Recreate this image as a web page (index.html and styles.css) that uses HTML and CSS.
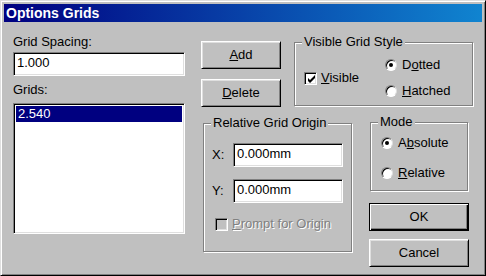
FILE: index.html
```html
<!DOCTYPE html>
<html lang="en">
<head>
    <meta charset="UTF-8">
    <title>Options Grids</title>
    <link rel="stylesheet" href="styles.css">
</head>
<body>

    <div class="window">
        <div class="titlebar">Options Grids</div>

        <div class="dialog">
            <!-- Left column: spacing + grid list -->
            <div class="col-left">
                <div class="label">Grid Spacing:</div>
                <div class="field field-spacing">1.000</div>
                <div class="label label-grids">Grids:</div>
                <div class="listbox">
                    <div class="list-item selected">2.540</div>
                </div>
            </div>

            <div class="col-right">
                <div class="row-top">
                    <div class="btn-stack">
                        <div class="btn"><u>A</u>dd</div>
                        <div class="btn"><u>D</u>elete</div>
                    </div>

                    <div class="group group-visible">
                        <span class="group-title">Visible Grid Style</span>
                        <div class="visible-body">
                            <div class="check check-visible">
                                <span class="box">
                                    <svg width="9" height="9" viewBox="0 0 9 9"><path d="M1 3v3l2 2l5-5v-3l-5 5z" fill="#000"/></svg>
                                </span>
                                <span><u>V</u>isible</span>
                            </div>
                            <div class="radio-stack">
                                <div class="option"><span class="radio checked"></span><span>D<u>o</u>tted</span></div>
                                <div class="option"><span class="radio"></span><span><u>H</u>atched</span></div>
                            </div>
                        </div>
                    </div>
                </div>

                <div class="row-bottom">
                    <div class="group group-relative">
                        <span class="group-title">Relative Grid Origin</span>
                        <div class="relative-body">
                            <div class="coord-row">
                                <span class="coord-label">X:</span>
                                <div class="field field-coord">0.000mm</div>
                            </div>
                            <div class="coord-row coord-y">
                                <span class="coord-label">Y:</span>
                                <div class="field field-coord">0.000mm</div>
                            </div>
                            <div class="check check-prompt disabled">
                                <span class="box"></span>
                                <span><u>P</u>rompt for Origin</span>
                            </div>
                        </div>
                    </div>

                    <div class="right-stack">
                        <div class="group group-mode">
                            <span class="group-title">Mode</span>
                            <div class="mode-body">
                                <div class="option"><span class="radio checked"></span><span>A<u>b</u>solute</span></div>
                                <div class="option option-relative"><span class="radio"></span><span><u>R</u>elative</span></div>
                            </div>
                        </div>
                        <div class="btn btn-default btn-ok">OK</div>
                        <div class="btn btn-cancel">Cancel</div>
                    </div>
                </div>
            </div>
        </div>
    </div>

</body>
</html>
```

FILE: styles.css
```css
/* General Styling */
body {
    margin: 0;
    padding: 0;
    font-family: 'Liberation Sans', Arial, sans-serif;
    font-size: 13px;
    line-height: 16px;
    color: #000;
    background: #c0c0c0;
}

u {
    text-decoration: underline;
}

.window {
    width: 486px;
    height: 276px;
    box-sizing: border-box;
    padding: 3px;
    background: #c0c0c0;
    border: 1px solid;
    border-color: #dfdfdf #000 #000 #dfdfdf;
    box-shadow: inset 1px 1px 0 #fff, inset -1px -1px 0 #808080;
}

.titlebar {
    height: 18px;
    line-height: 18px;
    padding-left: 2px;
    background: linear-gradient(to right, #000080, #1084d0);
    color: #fff;
    font-weight: bold;
    font-size: 14px;
}

.dialog {
    display: flex;
    padding-left: 9px;
}

/* Left column */
.col-left {
    width: 172px;
    padding-top: 12px;
}

.label {
    height: 16px;
}

.label-grids {
    margin-top: 6px;
}

.field {
    box-sizing: border-box;
    height: 24px;
    line-height: 20px;
    padding: 0 3px;
    background: #fff;
    border: 1px solid;
    border-color: #808080 #fff #fff #808080;
    box-shadow: inset 1px 1px 0 #000, inset -1px -1px 0 #dfdfdf;
}

.field-spacing {
    margin-top: 2px;
}

.listbox {
    box-sizing: border-box;
    height: 131px;
    margin-top: 5px;
    padding: 2px;
    background: #fff;
    border: 1px solid;
    border-color: #808080 #fff #fff #808080;
    box-shadow: inset 1px 1px 0 #000, inset -1px -1px 0 #dfdfdf;
}

.list-item {
    height: 16px;
    padding-left: 2px;
}

.list-item.selected {
    background: #000080;
    color: #fff;
}

/* Right side */
.col-right {
    width: 273px;
    margin-left: 16px;
}

.row-top {
    display: flex;
    align-items: flex-start;
    margin-top: 19px;
}

.btn-stack {
    display: flex;
    flex-direction: column;
    gap: 10px;
    width: 80px;
}

.btn {
    box-sizing: border-box;
    height: 28px;
    line-height: 26px;
    text-align: center;
    background: #c0c0c0;
    border: 1px solid;
    border-color: #fff #000 #000 #fff;
    box-shadow: inset 1px 1px 0 #dfdfdf, inset -1px -1px 0 #808080;
}

.btn-default {
    border-color: #000;
    box-shadow: inset 1px 1px 0 #fff, inset -1px -1px 0 #000, inset -2px -2px 0 #808080;
}

/* Group boxes */
.group {
    box-sizing: border-box;
    border: 1px solid #808080;
    box-shadow: inset 1px 1px 0 #fff, 1px 1px 0 #fff;
}

.group-title {
    display: block;
    width: fit-content;
    height: 16px;
    margin: -9px 0 0 7px;
    padding: 0 2px;
    background: #c0c0c0;
}

.group-visible {
    width: 179px;
    height: 64px;
    margin: 1px 0 0 13px;
}

.visible-body {
    display: flex;
    align-items: center;
    padding: 7px 0 0 9px;
}

.check {
    display: flex;
    align-items: center;
    gap: 4px;
    height: 16px;
}

.check-visible {
    width: 81px;
}

.box {
    box-sizing: border-box;
    width: 13px;
    height: 13px;
    padding: 2px;
    background: #fff;
    border: 1px solid;
    border-color: #808080 #fff #fff #808080;
    box-shadow: inset 1px 1px 0 #000, inset -1px -1px 0 #dfdfdf;
}

.box svg {
    display: block;
}

.radio-stack {
    display: flex;
    flex-direction: column;
    gap: 10px;
}

.option {
    display: flex;
    align-items: center;
    gap: 5px;
    height: 16px;
}

.radio {
    box-sizing: border-box;
    width: 12px;
    height: 12px;
    border-radius: 50%;
    background: #fff;
    border: 1px solid;
    border-color: #808080 #dfdfdf #fff #808080;
    box-shadow: inset 1px 1px 0 #000;
    display: flex;
    align-items: center;
    justify-content: center;
}

.radio.checked::after {
    content: '';
    width: 4px;
    height: 4px;
    border-radius: 50%;
    background: #000;
}

.row-bottom {
    display: flex;
    align-items: flex-start;
    margin-top: 15px;
}

.group-relative {
    width: 149px;
    height: 129px;
    margin: 1px 0 0 2px;
}

.relative-body {
    padding: 12px 0 0 8px;
}

.coord-row {
    display: flex;
    align-items: center;
}

.coord-y {
    margin-top: 12px;
}

.coord-label {
    width: 21px;
}

.field-coord {
    width: 110px;
}

.check-prompt {
    margin: 13px 0 0 3px;
}

.disabled {
    color: #808080;
    text-shadow: 1px 1px 0 #fff;
}

.disabled .box {
    background: #c0c0c0;
}

.right-stack {
    width: 100px;
    margin-left: 17px;
}

.group-mode {
    width: 98px;
    height: 69px;
    margin-left: 1px;
}

.mode-body {
    padding: 5px 0 0 10px;
}

.option-relative {
    margin-top: 14px;
}

.btn-ok {
    margin-top: 12px;
}

.btn-cancel {
    margin-top: 8px;
}
```
